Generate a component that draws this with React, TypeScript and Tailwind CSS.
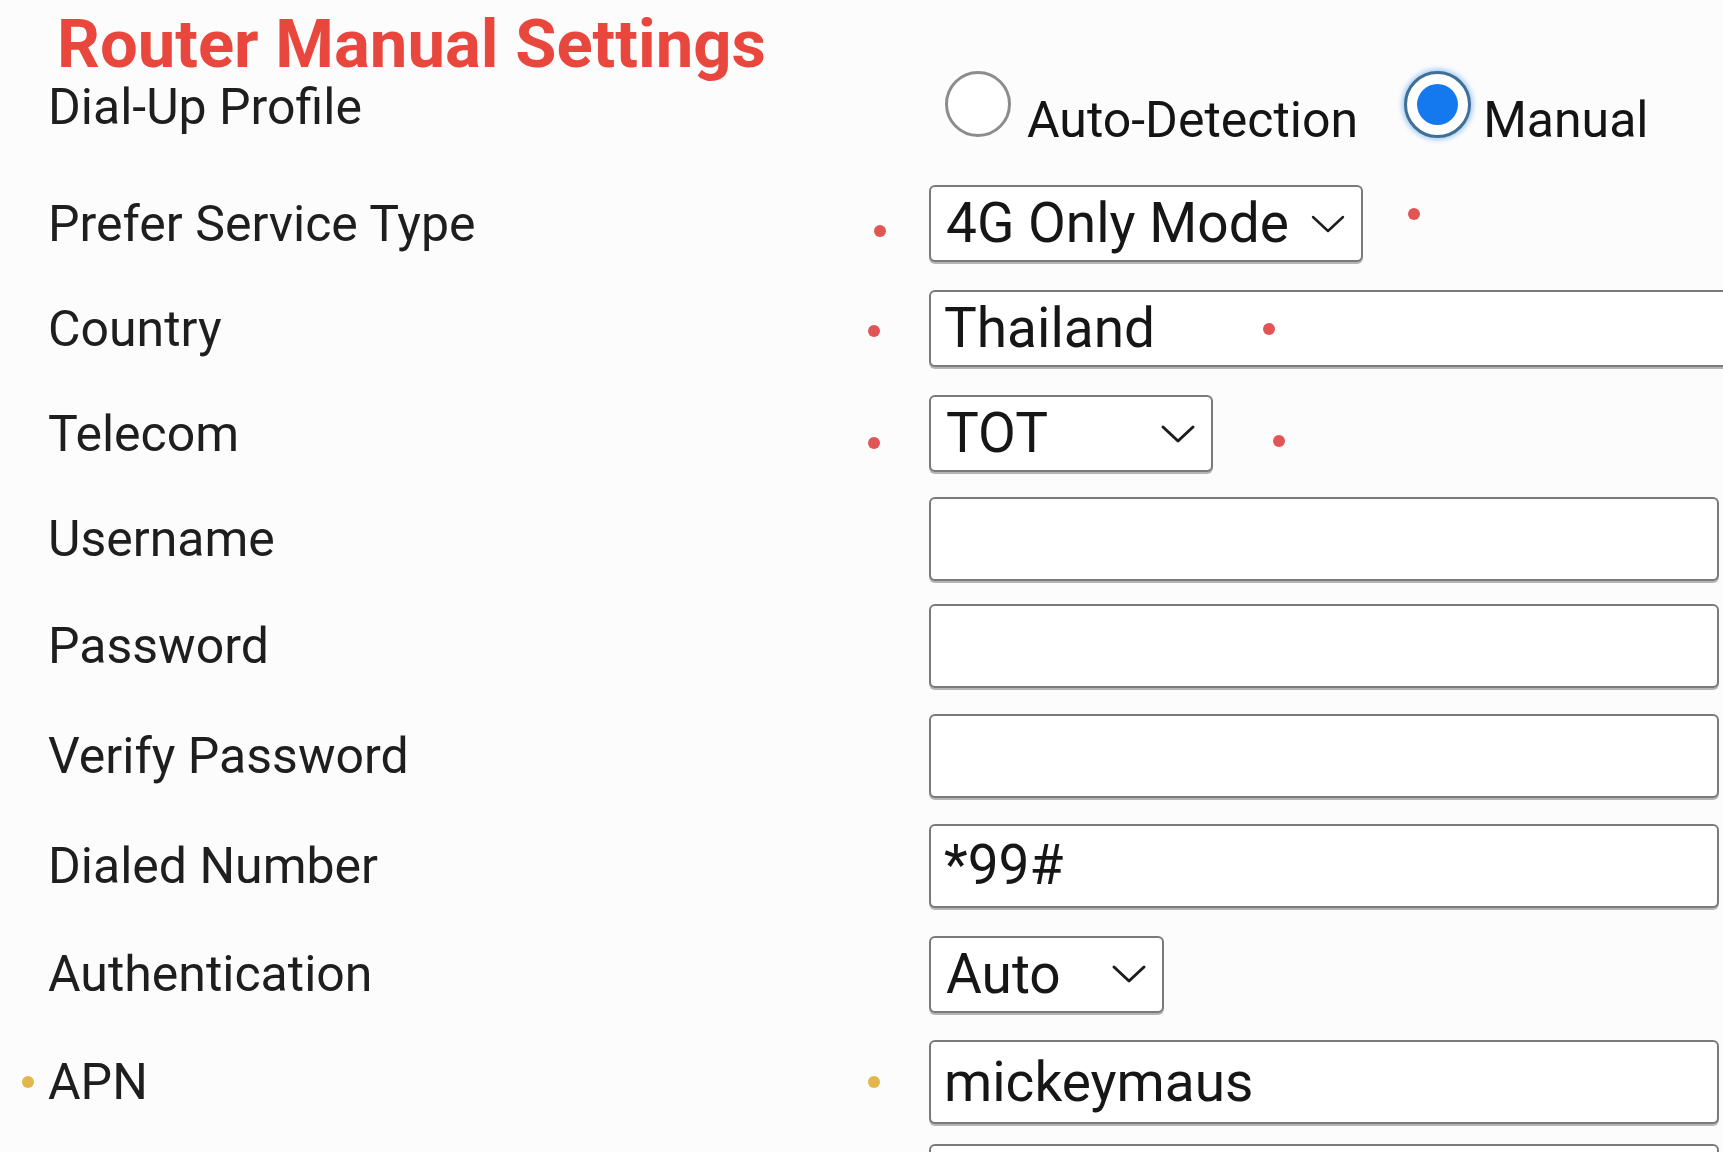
import type { ReactNode } from "react";

function Dot({ yellow = false, className = "" }: { yellow?: boolean; className?: string }) {
  return (
    <span
      className={
        (yellow ? "bg-[#e3b64c] " : "bg-[#e25555] ") +
        "block h-[12px] w-[12px] shrink-0 rounded-full " +
        className
      }
    />
  );
}

function Chevron({ thin = false }: { thin?: boolean }) {
  return (
    <svg width="36" height="20" viewBox="0 0 36 20" fill="none">
      <polyline
        points="3,3 18,17 33,3"
        stroke="#1c1c1c"
        strokeWidth={thin ? 2.4 : 3}
        strokeLinecap="round"
        strokeLinejoin="round"
      />
    </svg>
  );
}

function Row({
  label,
  height,
  lead,
  mark,
  children,
}: {
  label: string;
  height: string;
  lead?: ReactNode;
  mark?: ReactNode;
  children?: ReactNode;
}) {
  return (
    <div className={"flex shrink-0 items-center " + height}>
      <div className="flex w-[868px] shrink-0 items-center">
        <div className="flex w-[48px] items-center">{lead}</div>
        <span className="text-[50px] leading-[50px] text-[#1e1e1e]">{label}</span>
      </div>
      <div className="flex w-[61px] shrink-0 items-center">{mark}</div>
      {children}
    </div>
  );
}

function SelectBox({ value, width, thin }: { value: string; width: string; thin?: boolean }) {
  return (
    <div
      className={
        "flex h-[77px] shrink-0 items-center justify-between rounded-[6px] border-2 border-[#7a7a7a] bg-white pl-[15px] pr-[15px] shadow-[0_2px_0_#b5b5b5] " +
        width
      }
    >
      <span className="text-[55px] leading-none text-[#161616]">{value}</span>
      <Chevron thin={thin} />
    </div>
  );
}

function TextBox({
  value,
  height = "h-[84px]",
  width = "w-[790px]",
  children,
}: {
  value?: string;
  height?: string;
  width?: string;
  children?: ReactNode;
}) {
  return (
    <div
      className={
        "relative flex shrink-0 items-center rounded-[6px] border-2 border-[#7a7a7a] bg-white pl-[13px] shadow-[0_2px_0_#b5b5b5] " +
        height +
        " " +
        width
      }
    >
      {value && <span className="text-[55px] leading-none text-[#161616]">{value}</span>}
      {children}
    </div>
  );
}

export default function App() {
  return (
    <div className="flex h-[1152px] w-[1723px] flex-col overflow-hidden bg-[#fcfcfc] pt-[10px] font-['Roboto','Liberation_Sans',sans-serif]">
      <h1 className="h-[61px] shrink-0 pl-[57px] text-[67px] font-bold leading-[68px] text-[#e9473d]">
        Router Manual Settings
      </h1>

      {/* Dial-up profile */}
      <div className="flex h-[100px] shrink-0 items-start">
        <div className="flex w-[868px] shrink-0 pl-[48px] pt-[11px]">
          <span className="text-[50px] leading-[50px] text-[#1e1e1e]">Dial-Up Profile</span>
        </div>
        <div className="flex items-start pl-[77px]">
          <span className="block h-[66px] w-[66px] rounded-full border-[3px] border-[#8c8c8c] bg-white" />
          <span className="ml-[16px] mt-[24px] text-[50px] leading-[50px] text-[#141414]">Auto-Detection</span>
          <span className="ml-[46px] flex h-[67px] w-[67px] items-center justify-center rounded-full border-[3px] border-[#3f6f94] bg-white shadow-[0_0_5px_2px_rgba(50,140,240,0.45)]">
            <span className="block h-[41px] w-[41px] rounded-full bg-[#1479ef]" />
          </span>
          <span className="ml-[12px] mt-[24px] text-[50px] leading-[50px] text-[#141414]">Manual</span>
        </div>
      </div>

      <Row label="Prefer Service Type" height="h-[105px]" mark={<Dot className="ml-[6px] mt-[14px]" />}>
        <SelectBox value="4G Only Mode" width="w-[434px]" thin />
        <Dot className="mb-[20px] ml-[45px]" />
      </Row>

      <Row label="Country" height="h-[105px]" mark={<Dot className="mt-[4px]" />}>
        <TextBox value="Thailand" height="h-[77px]" width="w-[830px]">
          <Dot className="absolute left-[332px] top-[31px]" />
        </TextBox>
      </Row>

      <Row label="Telecom" height="h-[105px]" mark={<Dot className="mt-[18px]" />}>
        <SelectBox value="TOT" width="w-[284px]" />
        <Dot className="ml-[60px] mt-[14px]" />
      </Row>

      <Row label="Username" height="h-[105px]">
        <TextBox />
      </Row>

      <Row label="Password" height="h-[110px]">
        <TextBox />
      </Row>

      <Row label="Verify Password" height="h-[110px]">
        <TextBox />
      </Row>

      <Row label="Dialed Number" height="h-[109px]">
        <TextBox value="*99#" />
      </Row>

      <Row label="Authentication" height="h-[108px]">
        <SelectBox value="Auto" width="w-[235px]" />
      </Row>

      <Row
        label="APN"
        height="h-[108px]"
        lead={<Dot yellow className="ml-[22px]" />}
        mark={<Dot yellow />}
      >
        <TextBox value="mickeymaus" />
      </Row>

      <div className="flex shrink-0 pt-[8px]">
        <div className="w-[929px] shrink-0" />
        <TextBox />
      </div>
    </div>
  );
}
